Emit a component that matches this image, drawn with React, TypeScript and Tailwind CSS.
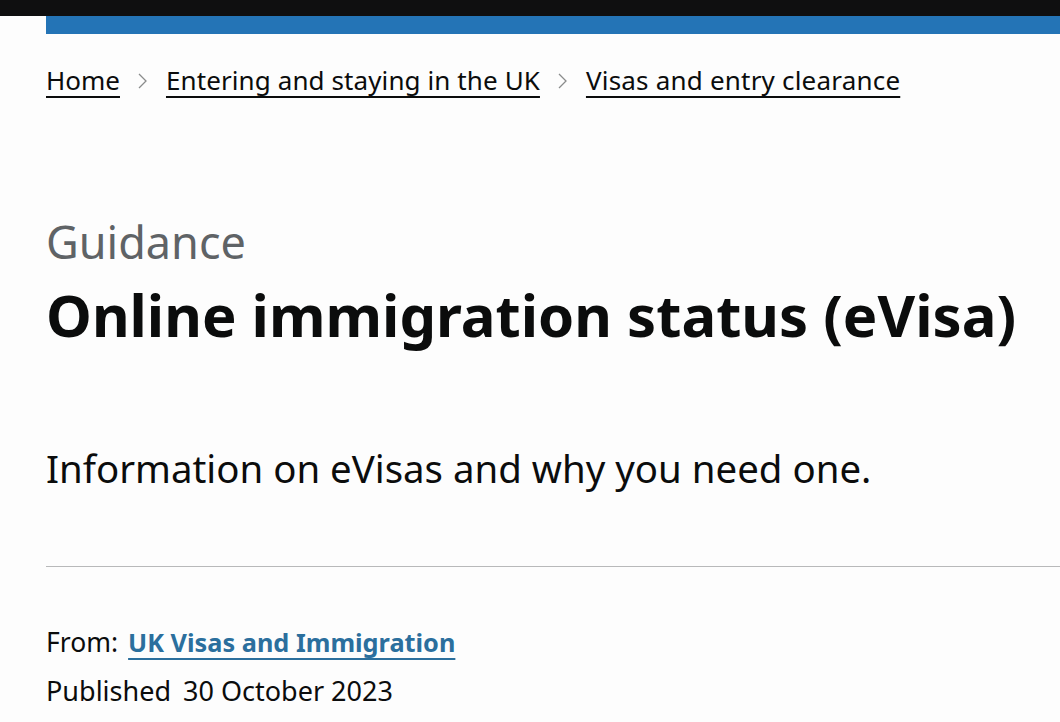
import React from "react";

function Chevron() {
  return (
    <svg width="12" height="20" viewBox="0 0 12 20" className="mx-[17px] mt-[2px]" fill="none">
      <path d="M2 3 L9 10 L2 17" stroke="#8a8c8c" strokeWidth="1.3" />
    </svg>
  );
}

export default function App() {
  const font = { fontFamily: '"Noto Sans", "Liberation Sans", sans-serif' };
  return (
    <div className="min-h-[722px] w-[1060px] overflow-hidden bg-[#fdfdfd] text-[#0b0c0c]" style={font}>
      <div className="h-[16px] bg-[#0f0f10]" />
      <div className="pl-[46px]">
        <div className="h-[18px] bg-[#2474b6]" />
        <nav className="mt-[26px] flex items-center text-[26px] leading-[40px]">
          <a className="underline decoration-[2px] underline-offset-[6px]">Home</a>
          <Chevron />
          <a className="underline decoration-[2px] underline-offset-[6px] tracking-[0.1px]">Entering and staying in the UK</a>
          <Chevron />
          <a className="underline decoration-[2px] underline-offset-[6px] tracking-[0.2px]">Visas and entry clearance</a>
        </nav>
        <div className="mt-[117px] text-[45px] leading-[50px] text-[#5f6366]">Guidance</div>
        <h1 className="mt-[13px] text-[58px] font-bold leading-[70px]">Online immigration status (eVisa)</h1>
        <p className="mt-[93px] text-[38.4px] leading-[50px]">Information on eVisas and why you need one.</p>
        <hr className="mt-[73px] border-t border-[#b8b9ba]" />
        <div className="mt-[56px] flex items-baseline text-[26.5px] leading-[38px]">
          <span>From:</span>
          <a className="ml-[10px] text-[25.3px] font-bold text-[#2b6f9d] underline decoration-[2px] underline-offset-[6px]">UK Visas and Immigration</a>
        </div>
        <div className="mt-[11px] flex items-baseline text-[27px] leading-[38px]">
          <span>Published</span>
          <span className="ml-[12px]">30 October 2023</span>
        </div>
      </div>
    </div>
  );
}
